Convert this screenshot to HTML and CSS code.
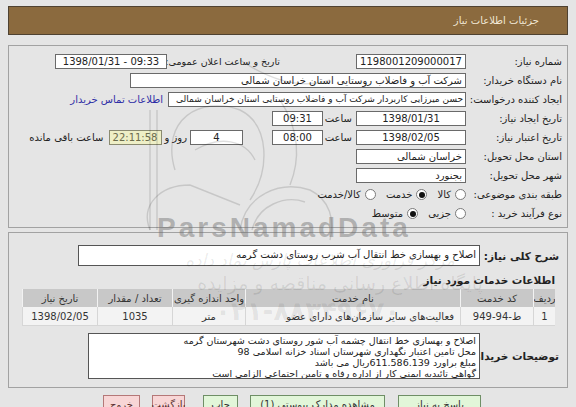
FILE: index.html
```html
<!DOCTYPE html>
<html lang="fa" dir="rtl">
<head>
<meta charset="utf-8">
<title>جزئیات اطلاعات نیاز</title>
<link rel="stylesheet" href="styles.css">
</head>
<body>
<div class="page">
  <div class="header">جزئیات اطلاعات نیاز</div>

  <div class="panel p1">
    <div class="row">
      <span class="lbl">شماره نیاز:</span>
      <span class="box c ltr w110">1198001209000017</span>
      <span class="lbl2">تاریخ و ساعت اعلان عمومی:</span>
      <span class="box c ltr w112">1398/01/31 - 09:33</span>
    </div>
    <div class="row">
      <span class="lbl">نام دستگاه خریدار:</span>
      <span class="box w336">شرکت آب و فاضلاب روستایی استان خراسان شمالی</span>
    </div>
    <div class="row">
      <span class="lbl">ایجاد کننده درخواست:</span>
      <span class="box w298 small">حسن  میرزایی کاربردار شرکت آب و فاضلاب روستایی استان خراسان شمالی</span>
      <span class="link">اطلاعات تماس خریدار</span>
    </div>
    <div class="row">
      <span class="lbl">تاریخ ایجاد نیاز:</span>
      <span class="box c ltr w110">1398/01/31</span>
      <span class="saat">ساعت</span>
      <span class="box c ltr w51">09:31</span>
    </div>
    <div class="row">
      <span class="lbl">تاریخ اعتبار نیاز:</span>
      <span class="box c ltr w110">1398/02/05</span>
      <span class="saat">ساعت</span>
      <span class="box c ltr w51">08:00</span>
      <span class="box c ltr w53 days">4</span>
      <span class="ruz">روز و</span>
      <span class="remain c ltr">22:11:58</span>
      <span class="rem-lbl">ساعت باقی مانده</span>
    </div>
    <div class="row">
      <span class="lbl">استان محل تحویل:</span>
      <span class="box w110">خراسان شمالی</span>
    </div>
    <div class="row">
      <span class="lbl">شهر محل تحویل:</span>
      <span class="box w110">بجنورد</span>
    </div>
    <div class="row">
      <span class="lbl">طبقه بندی موضوعی:</span>
      <span class="radio"></span><span class="rtext">کالا</span>
      <span class="radio on"></span><span class="rtext">خدمت</span>
      <span class="radio"></span><span class="rtext">کالا/خدمت</span>
    </div>
    <div class="row">
      <span class="lbl">نوع فرآیند خرید :</span>
      <span class="radio"></span><span class="rtext">جزیی</span>
      <span class="radio on"></span><span class="rtext">متوسط</span>
    </div>
  </div>

  <div class="panel p2">
    <div class="drow">
      <span class="blbl">شرح کلی نیاز:</span>
      <div class="tbox">اصلاح و بهسازی خط انتقال آب شرب روستای دشت گرمه</div>
    </div>
    <div class="sect">اطلاعات خدمات مورد نیاز</div>
    <div class="grid">
      <div class="th">ردیف</div>
      <div class="th">کد خدمت</div>
      <div class="th">نام خدمت</div>
      <div class="th">واحد اندازه گیری</div>
      <div class="th">تعداد / مقدار</div>
      <div class="th">تاریخ نیاز</div>
      <div class="td">1</div>
      <div class="td"><bdo dir="ltr">949-94-ط</bdo></div>
      <div class="td tr">فعالیت‌های سایر سازمان‌های دارای عضو</div>
      <div class="td">متر</div>
      <div class="td">1035</div>
      <div class="td">1398/02/05</div>
    </div>
    <div class="drow2">
      <span class="blbl">توضیحات خریدار:</span>
      <div class="tarea">
        <div>اصلاح و بهسازی خط انتقال چشمه آب شور روستای دشت شهرستان گرمه</div>
        <div>محل تامین اعتبار نگهداری شهرستان اسناد خزانه اسلامی 98</div>
        <div>مبلغ براورد 611.586.139ریال می باشد</div>
        <div>گواهی تائیدیه ایمنی کار از اداره رفاه و تامین اجتماعی الزامی است</div>
      </div>
    </div>
  </div>

  <div class="buttons">
    <span class="btn green b1">پاسخ به نیاز</span>
    <span class="btn green b2">مشاهده مدارک پیوستی (1)</span>
    <span class="btn green b3">چاپ</span>
    <span class="btn pink b4">بازگشت</span>
    <span class="btn pink b5">خروج</span>
  </div>
</div>

<div class="wm">
  <svg class="wm-logo" width="576" height="407" viewBox="0 0 576 407">
    <g fill="none" stroke="rgba(0,0,0,0.13)" stroke-width="1.4">
      <line x1="150" y1="110" x2="150" y2="230"/>
      <line x1="157" y1="110" x2="157" y2="230"/>
      <path d="M175 170 C 160 120, 200 95, 240 110 C 270 125, 270 170, 250 200"/>
      <path d="M195 150 C 220 135, 245 140, 255 160"/>
      <path d="M150 230 C 140 205, 160 185, 190 185 L 240 205"/>
      <path d="M240 230 C 245 195, 280 180, 310 190 C 330 200, 335 220, 330 240"/>
      <path d="M252 230 C 258 205, 285 195, 305 202"/>
      <path d="M240 60 C 270 80, 300 90, 330 80"/>
      <path d="M280 100 C 300 130, 300 160, 290 185"/>
    </g>
  </svg>
  <div class="wm-en">ParsNamadData</div>
  <div class="wm-fa1">مرکز فراوری اطلاعات پارس نماد داده</div>
  <div class="wm-fa2">پایگاه اطلاع رسانی مناقصه و مزایده</div>
  <div class="wm-num">۰۲۱-۸۸۳۴۹۶۷۰</div>
</div>
</body>
</html>
```

FILE: styles.css
```css
* { box-sizing: border-box; }
html, body { margin: 0; padding: 0; }
body {
  background: #e5e5e5;
  font-family: "DejaVu Sans", sans-serif;
  font-size: 10px;
  color: #222;
  direction: rtl;
  width: 576px;
  height: 407px;
  overflow: hidden;
  position: relative;
}
.page { padding: 6px 8px 0 8px; }

.header {
  height: 29px;
  background: #8b6a3e;
  border: 1px solid #4f4231;
  color: #f1e8d6;
  display: flex;
  align-items: center;
  padding-right: 28px;
  font-size: 10px;
}

.panel { border: 1px solid #a2a2a2; background: #e5e5e5; }
.p1 { margin-top: 10px; padding: 6px 0 4px; }

.row { display: flex; align-items: center; height: 19px; white-space: nowrap; }
.lbl { flex: none; width: 101px; padding-right: 5px; }
.lbl2 { flex: none; width: 110px; margin-right: 76px; font-size: 9.5px; letter-spacing: -0.2px; }

.box {
  flex: none;
  height: 15px;
  background: #fff;
  border: 1px solid #6a6a6a;
  display: flex;
  align-items: center;
  padding: 0 3px;
  overflow: hidden;
  white-space: nowrap;
  line-height: 13px;
}
.box.small { font-size: 9px; padding: 0 2px; }
.c { justify-content: center; }
.ltr { direction: ltr; }
.w110 { width: 110px; }
.w112 { width: 112px; margin-right: 3px; }
.w336 { width: 336px; }
.w298 { width: 298px; }
.w51 { width: 51px; margin-right: 3px; }
.w53 { width: 53px; }
.days { margin-right: 29px; }

.link { color: #2e2ea6; margin-right: 5px; }
.saat { flex: none; width: 26px; margin-right: 4px; }
.ruz { flex: none; margin: 0 3px; }
.remain {
  flex: none;
  width: 53px;
  height: 15px;
  background: #eeefc6;
  border: 1px solid #8a8a70;
  color: #6b6b4c;
  display: flex;
  align-items: center;
}
.rem-lbl { margin-right: 5px; }

.radio {
  flex: none;
  width: 11px;
  height: 11px;
  border: 1px solid #7a7a7a;
  border-radius: 50%;
  background: #fff;
  display: flex;
  align-items: center;
  justify-content: center;
}
.radio.on::after {
  content: "";
  width: 6px;
  height: 6px;
  border-radius: 50%;
  background: #111;
}
.rtext { margin-right: 4px; margin-left: 10px; }

.p2 { margin-top: 4px; padding: 12px 0 8px; }
.drow { display: flex; align-items: center; }
.blbl { flex: none; width: 87px; padding-right: 8px; font-weight: bold; font-size: 10.5px; white-space: nowrap; }
.tbox {
  width: 402px;
  height: 21px;
  background: #fff;
  border: 1px solid #555;
  padding: 2px 3px 0;
  line-height: 13px;
  white-space: nowrap;
  overflow: hidden;
}
.sect {
  margin-top: 7px;
  height: 14px;
  line-height: 14px;
  padding-right: 12px;
  font-weight: bold;
  font-size: 10.5px;
}
.grid {
  margin: 2px 12px 0 0;
  width: 533px;
  display: grid;
  grid-template-columns: 22px 73px 215px 73px 75px 75px;
  grid-template-rows: 18px 19px;
}
.th, .td { display: flex; align-items: center; justify-content: center; white-space: nowrap; overflow: hidden; }
.th { background: #c8c8c8; border-left: 1px solid #f2f2f2; color: #333; }
.td { background: #f3f3f3; border-left: 1px solid #d6d6d6; border-bottom: 1px solid #d6d6d6; color: #333; }
.td.tr { justify-content: flex-start; padding-right: 6px; }

.drow2 { display: flex; align-items: center; margin-top: 7px; }
.tarea {
  width: 392px;
  height: 46px;
  background: #fff;
  border: 1px solid #555;
  padding: 1px 3px 0;
  font-size: 9.5px;
  line-height: 11px;
  white-space: nowrap;
  overflow: hidden;
}

.buttons { display: flex; margin-top: 7px; padding-right: 87px; }
.btn {
  flex: none;
  height: 18px;
  display: flex;
  align-items: center;
  justify-content: center;
  white-space: nowrap;
}
.green { background: #e2f6d9; border: 1px solid #6f8f66; color: #333; }
.pink { background: #f8d6d6; border: 1px solid #b57878; color: #5a2c2c; }
.b1 { width: 83px; }
.b2 { width: 135px; margin-right: 13px; }
.b3 { width: 35px; margin-right: 12px; }
.b4 { width: 33px; margin-right: 18px; }
.b5 { width: 37px; margin-right: 12px; }

.wm { position: absolute; left: 0; top: 0; width: 576px; height: 407px; pointer-events: none; }
.wm-logo { position: absolute; left: 0; top: 0; }
.wm-en {
  position: absolute;
  left: 157px;
  top: 212px;
  direction: ltr;
  font-family: "Liberation Sans", sans-serif;
  font-weight: bold;
  font-size: 28px;
  letter-spacing: 3px;
  color: rgba(110,110,110,0.45);
}
.wm-fa1 {
  position: absolute;
  left: 160px;
  top: 250px;
  width: 320px;
  text-align: center;
  font-size: 17px;
  font-style: italic;
  color: rgba(0,0,0,0.09);
  white-space: nowrap;
}
.wm-fa2 {
  position: absolute;
  left: 185px;
  top: 272px;
  width: 310px;
  text-align: center;
  font-size: 19px;
  color: rgba(0,0,0,0.09);
  white-space: nowrap;
}
.wm-num {
  position: absolute;
  left: 215px;
  top: 296px;
  direction: ltr;
  font-size: 26px;
  font-weight: bold;
  color: rgba(0,0,0,0.08);
  white-space: nowrap;
}
```
